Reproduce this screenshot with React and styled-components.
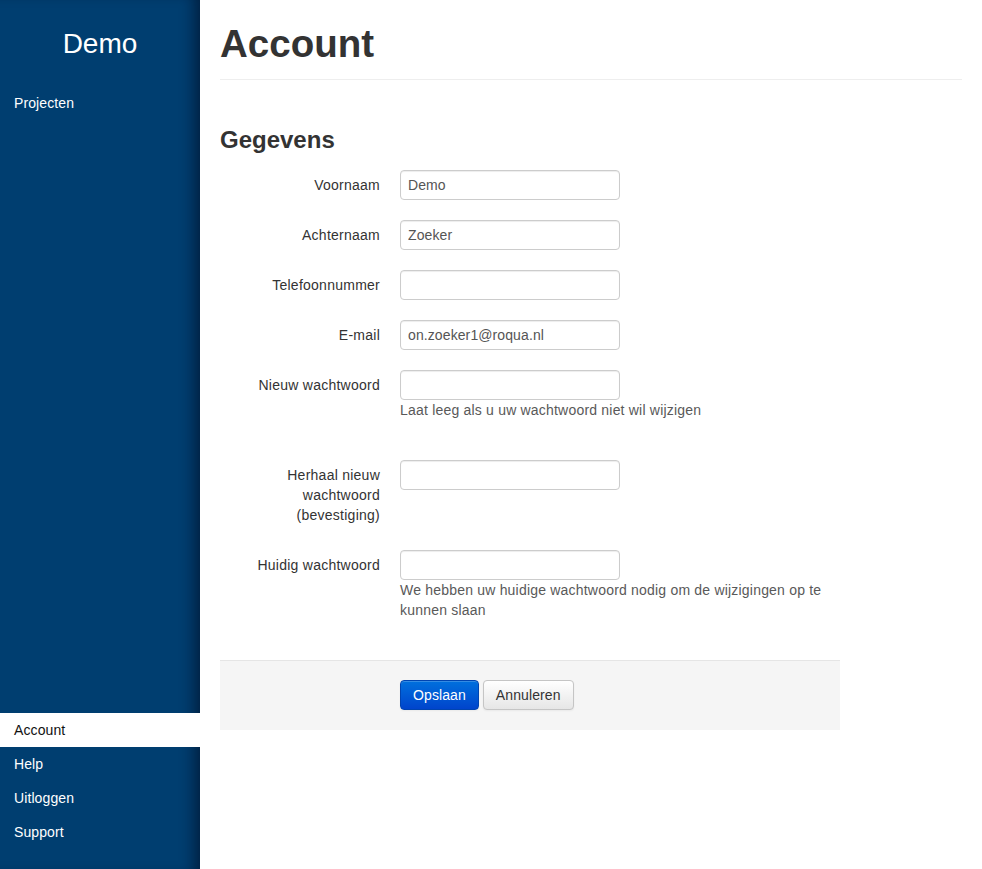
import React from "react";
import styled, { createGlobalStyle } from "styled-components";

const GlobalStyle = createGlobalStyle`
  html, body {
    margin: 0;
    padding: 0;
    background: #fff;
    font-family: "Liberation Sans", Arial, sans-serif;
    font-size: 14px;
    line-height: 20px;
    color: #333;
  }
`;

const Layout = styled.div`
  display: flex;
  min-height: 100vh;
`;

const Sidebar = styled.aside`
  width: 200px;
  flex-shrink: 0;
  display: flex;
  flex-direction: column;
  background-color: #003e70;
  box-shadow: inset -14px 0 14px -8px rgba(0, 10, 30, 0.55);
  padding-bottom: 20px;
  box-sizing: border-box;
`;

const Brand = styled.div`
  color: #fff;
  font-size: 28px;
  line-height: 32px;
  text-align: center;
  padding-top: 28px;
  margin-bottom: 26px;
`;

const NavList = styled.nav`
  display: flex;
  flex-direction: column;
  margin-top: ${(p) => (p.$bottom ? "auto" : "0")};
`;

const NavItem = styled.a`
  display: block;
  padding: 7px 14px;
  line-height: 20px;
  font-size: 14px;
  letter-spacing: 0.1px;
  text-decoration: none;
  color: ${(p) => (p.$active ? "#111" : "#fff")};
  background: ${(p) => (p.$active ? "#fff" : "transparent")};
  cursor: pointer;
`;

const Content = styled.main`
  flex: 1;
  padding: 0 20px;
`;

const PageHeader = styled.div`
  padding-top: 24px;
  padding-bottom: 15px;
  border-bottom: 1px solid #eee;
`;

const Title = styled.h1`
  margin: 0;
  font-size: 38.5px;
  line-height: 40px;
  font-weight: bold;
  color: #333;
`;

const Form = styled.form`
  width: 620px;
  margin-top: 40px;
`;

const Legend = styled.h2`
  margin: 0 0 10px;
  font-size: 24px;
  line-height: 40px;
  font-weight: bold;
  color: #333;
`;

const Row = styled.div`
  display: flex;
  align-items: flex-start;
  margin-bottom: ${(p) => p.$gap || 20}px;
`;

const Label = styled.label`
  width: 140px;
  padding: 5px 0 0 20px;
  margin-right: 20px;
  text-align: right;
  letter-spacing: 0.25px;
  color: #333;
`;

const Controls = styled.div`
  display: flex;
  flex-direction: column;
  width: 440px;
`;

const Input = styled.input`
  width: 220px;
  height: 30px;
  box-sizing: border-box;
  padding: 4px 7px;
  font-family: "Liberation Sans", Arial, sans-serif;
  font-size: 14px;
  letter-spacing: 0.1px;
  color: #555;
  border: 1px solid #ccc;
  border-radius: 4px;
  box-shadow: inset 0 1px 1px rgba(0, 0, 0, 0.075);
  background: #fff;
  outline: none;
`;

const Help = styled.span`
  display: block;
  color: #595959;
  line-height: 20px;
  letter-spacing: 0.2px;
`;

const Actions = styled.div`
  display: flex;
  gap: 4px;
  padding: 19px 20px 20px 180px;
  background: #f5f5f5;
  border-top: 1px solid #e5e5e5;
`;

const Button = styled.button`
  height: 30px;
  padding: 4px 12px;
  font-family: "Liberation Sans", Arial, sans-serif;
  font-size: 14px;
  line-height: 20px;
  letter-spacing: 0.1px;
  border-radius: 4px;
  cursor: pointer;
  color: ${(p) => (p.$primary ? "#fff" : "#333")};
  border: 1px solid ${(p) => (p.$primary ? "#0044b0" : "#c5c5c5")};
  background-image: ${(p) =>
    p.$primary
      ? "linear-gradient(to bottom, #0070dd, #0044cc)"
      : "linear-gradient(to bottom, #ffffff, #e6e6e6)"};
  box-shadow: inset 0 1px 0 rgba(255, 255, 255, 0.2), 0 1px 2px rgba(0, 0, 0, 0.05);
`;

const fields = [
  { label: "Voornaam", value: "Demo" },
  { label: "Achternaam", value: "Zoeker" },
  { label: "Telefoonnummer", value: "" },
  { label: "E-mail", value: "on.zoeker1@roqua.nl" },
];

export default function App() {
  return (
    <>
      <GlobalStyle />
      <Layout>
        <Sidebar>
          <Brand>Demo</Brand>
          <NavList>
            <NavItem>Projecten</NavItem>
          </NavList>
          <NavList $bottom>
            <NavItem $active>Account</NavItem>
            <NavItem>Help</NavItem>
            <NavItem>Uitloggen</NavItem>
            <NavItem>Support</NavItem>
          </NavList>
        </Sidebar>
        <Content>
          <PageHeader>
            <Title>Account</Title>
          </PageHeader>
          <Form onSubmit={(e) => e.preventDefault()}>
            <Legend>Gegevens</Legend>
            {fields.map((f) => (
              <Row key={f.label}>
                <Label>{f.label}</Label>
                <Controls>
                  <Input type="text" defaultValue={f.value} />
                </Controls>
              </Row>
            ))}
            <Row $gap={40}>
              <Label>Nieuw wachtwoord</Label>
              <Controls>
                <Input type="password" />
                <Help>Laat leeg als u uw wachtwoord niet wil wijzigen</Help>
              </Controls>
            </Row>
            <Row $gap={25}>
              <Label>Herhaal nieuw wachtwoord (bevestiging)</Label>
              <Controls>
                <Input type="password" />
              </Controls>
            </Row>
            <Row $gap={40}>
              <Label>Huidig wachtwoord</Label>
              <Controls>
                <Input type="password" />
                <Help>
                  We hebben uw huidige wachtwoord nodig om de wijzigingen op te kunnen slaan
                </Help>
              </Controls>
            </Row>
            <Actions>
              <Button $primary type="submit">Opslaan</Button>
              <Button type="button">Annuleren</Button>
            </Actions>
          </Form>
        </Content>
      </Layout>
    </>
  );
}
